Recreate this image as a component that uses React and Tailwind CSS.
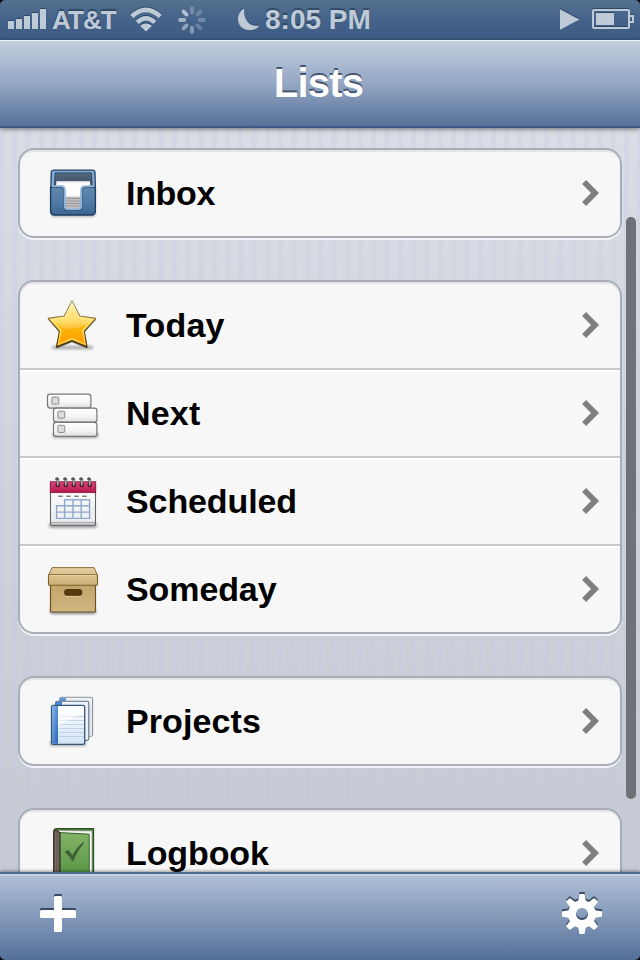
import React from "react";

function Gradient({ id, stops }) {
  return (
    <linearGradient id={id} x1="0" y1="0" x2="0" y2="1">
      {stops.map(([offset, color]) => (
        <stop key={offset} offset={offset} stopColor={color} />
      ))}
    </linearGradient>
  );
}

function SoftShadow({ id }) {
  return (
    <filter id={id} x="-20%" y="-100%" width="140%" height="300%">
      <feGaussianBlur stdDeviation="1.4" />
    </filter>
  );
}

const iconClass = "block h-[60px] w-[60px]";

function InboxIcon() {
  return (
    <svg className={iconClass} viewBox="0 -1 60 60">
      <defs>
        <Gradient id="inFront" stops={[[0, "#6187af"], [0.5, "#527ba5"], [1, "#3c658f"]]} />
        <Gradient id="inBack" stops={[[0, "#54697f"], [1, "#3a4c62"]]} />
        <Gradient id="inRim" stops={[[0, "#78a6d6"], [1, "#8fb6dc"]]} />
        <SoftShadow id="inS" />
      </defs>
      <rect x="7" y="48.5" width="44" height="4" rx="2" fill="#000" opacity="0.35" filter="url(#inS)" />
      <path d="M9.5 6.2H49Q50.8 6.2 51 8.2L51.4 26H6.8L7.2 8.2Q7.6 6.2 9.5 6.2Z" fill="url(#inRim)" stroke="#233f60" strokeWidth="1.3" />
      <path d="M11.2 9H47.4L48.2 22H10.4Z" fill="url(#inBack)" stroke="#304761" strokeWidth="1" />
      <path d="M12.4 17.2H46L46.4 24H38V45H20.4V24H12Z" fill="#fff" />
      <path d="M12.6 17.8H45.8" stroke="#ddd3dc" strokeWidth="1.2" />
      <rect x="20.6" y="32.5" width="17" height="12" fill="#c0c0c2" />
      <path d="M21 34.5H37M21 37H37M21 39.5H37M21 42H37" stroke="#98989b" strokeWidth="1" />
      <path d="M6.6 23.4H17Q20.2 23.4 20.2 27V43.5Q20.2 46.4 23.5 46.4H34.5Q37.8 46.4 37.8 43.5V27Q37.8 23.4 41 23.4H51.4V47Q51.4 51 47.4 51H10.6Q6.6 51 6.6 47Z" fill="url(#inFront)" stroke="#1d3f66" strokeWidth="1.4" />
      <path d="M8 22.3H17Q20.8 22.3 20.8 26V42.5Q20.8 45.2 24 45.2H34Q37.2 45.2 37.2 42.5V26Q37.2 22.3 41 22.3H50" fill="none" stroke="#8db5dc" strokeWidth="2" />
    </svg>
  );
}

function StarIcon() {
  return (
    <svg className={iconClass} viewBox="0 -1 60 60">
      <defs>
        <Gradient id="stFill" stops={[[0, "#ffe88a"], [0.45, "#ffd23c"], [0.55, "#fdb80d"], [1, "#ff9c00"]]} />
        <Gradient id="stRim" stops={[[0, "#fffbe0"], [0.5, "#ffe36a"], [1, "#ffc52e"]]} />
        <Gradient id="stLine" stops={[[0, "#aaa071"], [0.4, "#8b7430"], [1, "#3c2c14"]]} />
        <SoftShadow id="stS" />
      </defs>
      <rect x="8" y="50" width="41" height="3" rx="1.5" fill="#000" opacity="0.35" filter="url(#stS)" />
      <path d="M28 5.4L36 21L52.2 23.6L40.6 36.2L43.4 52.4L28 46.3L12.2 52.4L15.2 36.2L4 23.6L20 21Z" fill="#4b3c1c" opacity="0.85" />
      <path d="M28 4.8L35.8 20L51.8 22.4L40.3 35L43 50.8L28 44.6L12.4 50.8L15.4 35L4.1 22.4L20.2 20Z" fill="url(#stRim)" stroke="url(#stLine)" strokeWidth="1.1" strokeLinejoin="round" />
      <path d="M28 8.8L34.6 22L47.6 24L37.8 34.2L40.2 47L28 41.8L15.2 47L17.9 34.2L8.4 24L21.4 22Z" fill="url(#stFill)" />
      <path d="M28 8.8L34.6 22L47.6 24L42.3 29Q30 34.5 17 31.8L8.4 24L21.4 22Z" fill="#fff" opacity="0.22" />
    </svg>
  );
}

function StackIcon() {
  const drawers = [[3.5, 6.5], [9.5, 20.6], [9.5, 34.8]];
  return (
    <svg className={iconClass} viewBox="0 -4 60 60">
      <defs>
        <Gradient id="skFill" stops={[[0, "#fff"], [0.55, "#f6f6f6"], [1, "#dedede"]]} />
        <SoftShadow id="skS" />
      </defs>
      <rect x="9" y="45.5" width="45" height="5" rx="2" fill="#000" opacity="0.45" filter="url(#skS)" />
      {drawers.map(([x, y]) => (
        <g key={y}>
          <rect x={x} y={y + 0.6} width="43.4" height="14" rx="2.6" fill="url(#skFill)" stroke="#777" strokeWidth="1.2" />
          <rect x={x + 4.3} y={y + 3.6} width="7" height="7" rx="1" fill="#dcdcdc" stroke="#8b8b8b" strokeWidth="1" />
        </g>
      ))}
    </svg>
  );
}

function CalendarIcon() {
  return (
    <svg className={iconClass} viewBox="0 -3.4 60 60">
      <defs>
        <Gradient id="caTop" stops={[[0, "#d9487a"], [1, "#b5174f"]]} />
        <Gradient id="caPage" stops={[[0, "#fff"], [0.9, "#ececef"], [1, "#c5c5c8"]]} />
        <SoftShadow id="caS" />
      </defs>
      <rect x="5" y="49" width="48" height="4" rx="2" fill="#000" opacity="0.45" filter="url(#caS)" />
      <rect x="6.5" y="8" width="45" height="42.8" rx="1" fill="url(#caPage)" stroke="#5f6367" strokeWidth="1.1" />
      <path d="M7 48H51" stroke="#a3a5aa" strokeWidth="1" />
      <rect x="6.3" y="7.4" width="45.4" height="10.8" fill="url(#caTop)" stroke="#8c1b41" strokeWidth="0.9" />
      {[13.4, 21.4, 29.4, 37.4, 45.4].map((x) => (
        <g key={x}>
          <rect x={x - 1.8} y="8.4" width="4.4" height="4.4" rx="1.4" fill="#6f1435" />
          <path d={`M${x + 0.4} 10.8V5Q${x + 0.2} 3.7 ${x - 0.9} 4.5`} fill="none" stroke="#4d4e53" strokeWidth="2.6" strokeLinecap="round" />
          <path d={`M${x + 0.5} 10.4V5.4`} stroke="#dcdcdf" strokeWidth="1" />
        </g>
      ))}
      {[14.5, 22.5, 30.5, 38.5].map((x) => (
        <path key={x} d={`M${x} 21.8H${x + 4.4}`} stroke="#666669" strokeWidth="1.4" strokeDasharray="1.8 .4" />
      ))}
      <path d="M20.6 25.3H45.6M12.6 31.4H45.6M12.6 37.7H45.6M12.6 44H45.6M12.6 31.4V44M20.6 25.3V44M29 25.3V44M37.2 25.3V44M45.6 25.3V44" fill="none" stroke="#8da8ca" strokeWidth="1.4" strokeLinecap="square" />
    </svg>
  );
}

function BoxIcon() {
  return (
    <svg className={iconClass} viewBox="0 -2 60 60">
      <defs>
        <Gradient id="bxTop" stops={[[0, "#e6d2a6"], [1, "#d8be88"]]} />
        <Gradient id="bxLid" stops={[[0, "#dcc38e"], [1, "#cbae74"]]} />
        <Gradient id="bxBody" stops={[[0, "#a98c55"], [0.2, "#c5a76d"], [1, "#d0b580"]]} />
        <SoftShadow id="bxS" />
      </defs>
      <rect x="6" y="48" width="46" height="5" rx="2" fill="#000" opacity="0.45" filter="url(#bxS)" />
      <rect x="6.5" y="20" width="45" height="31" rx="1" fill="url(#bxBody)" stroke="#695126" strokeWidth="1.2" />
      <path d="M8 6.6H50L53.4 14H4.6Z" fill="url(#bxTop)" stroke="#8d713e" strokeWidth="1" strokeLinejoin="round" />
      <rect x="4.5" y="13.6" width="49" height="10.6" rx="1" fill="url(#bxLid)" stroke="#7c622f" strokeWidth="1.1" />
      <path d="M5.4 14.3H52.6" stroke="#efdcae" strokeWidth="1" />
      <rect x="20.5" y="28.5" width="17.4" height="5.8" rx="2.6" fill="#593b0b" stroke="#46300c" strokeWidth="0.9" />
      <path d="M22 35.6H36.5" stroke="#e5cb96" strokeWidth="0.9" />
    </svg>
  );
}

function ProjectsIcon() {
  return (
    <svg className={iconClass} viewBox="0 -1 60 60">
      <defs>
        <Gradient id="prPage" stops={[[0, "#fff"], [1, "#d3e3f5"]]} />
        <linearGradient id="prSpine" x1="0" y1="0" x2="1" y2="1">
          <stop offset="0" stopColor="#8ab9ec" />
          <stop offset="1" stopColor="#2464b4" />
        </linearGradient>
        <SoftShadow id="prS" />
      </defs>
      <rect x="6" y="49.6" width="36" height="4" rx="2" fill="#000" opacity="0.45" filter="url(#prS)" />
      <g stroke="#8a929c" strokeWidth="1.1">
        <rect x="15.6" y="5.2" width="33" height="39" rx="1.8" fill="#f0f1f3" />
        <path d="M16 5.8H22V9.6H16Z" fill="#5d98d4" stroke="none" />
        <path d="M45.5 14V42M47 14V42" stroke="#cfd5dc" strokeWidth="0.6" />
        <rect x="11.6" y="9.2" width="33.2" height="39.2" rx="1.8" fill="#edf2f8" stroke="#5d7185" />
        <path d="M12 9.8H18V13.6H12Z" fill="#4287cf" stroke="none" />
      </g>
      <rect x="7.5" y="13.3" width="33.2" height="39" rx="1.8" fill="url(#prPage)" stroke="#375779" strokeWidth="1.3" />
      <path d="M15 24.5H40M15 28.5H40M15 32.5H40M15 36.5H40M15 40.5H40M15 44.5H40" stroke="#a0bde0" strokeWidth="0.8" opacity="0.7" />
      <path d="M14 14H40V22Q34 23 24 28Q17 31 14 35Z" fill="#fff" opacity="0.6" />
      <rect x="8" y="13.9" width="6" height="37.8" fill="url(#prSpine)" />
    </svg>
  );
}

function LogbookIcon() {
  return (
    <svg className={iconClass} viewBox="0 -1.4 60 60">
      <defs>
        <Gradient id="lgCover" stops={[[0, "#83b367"], [1, "#559643"]]} />
      </defs>
      <path d="M10 5.5Q10.5 4.2 13 4.2H49.6V52H10Z" fill="#4c873a" stroke="#2c4d24" strokeWidth="1.1" />
      <path d="M12 6L48 6.6V50H44V10L12 8.6Z" fill="#f4f4f4" stroke="#8f9691" strokeWidth="0.6" />
      <path d="M15.8 8.2L45.2 9.8V52H15.8Z" fill="url(#lgCover)" stroke="#35652a" strokeWidth="1" />
      <path d="M9.6 7Q10 5 12 5.2L16 8.2V52H9.6Z" fill="#62584c" stroke="#322c25" strokeWidth="1" />
      <path d="M11.7 9V52M13.8 9V52" stroke="#8b8174" strokeWidth="0.6" />
      <path d="M20.6 27.5Q23.5 25.8 24.6 25.6L28.4 31.2Q32.5 23 40 17.2L39.4 19.6Q33 27 29.4 36.6H28.2Q25.5 31 20.6 27.5Z" fill="#3f5f36" />
    </svg>
  );
}

function Chevron() {
  return (
    <svg className="block h-[28px] w-[20px]" viewBox="0 0 20 28">
      <path d="M4.1 3.1L15 14L4.1 24.9" fill="none" stroke="#7f7f7f" strokeWidth="5.7" />
    </svg>
  );
}

function Row({ icon, label, spacing, last }) {
  return (
    <li className={`flex items-center pl-6 pr-5 ${last ? "h-[86px]" : "h-[88px] border-b-2 border-[#c8c8c8] shadow-[0_2px_0_#fff]"}`}>
      {icon}
      <span className={`ml-[22px] flex-1 text-[34px] leading-none font-bold text-black ${spacing}`}>{label}</span>
      <Chevron />
    </li>
  );
}

function Card({ children }) {
  return (
    <ul className="shrink-0 rounded-[16px] border-2 border-[#a9adb8] bg-[#f7f7f7] shadow-[0_2px_0_rgba(255,255,255,0.75),inset_0_2px_1px_rgba(0,0,0,0.08)]">
      {children}
    </ul>
  );
}

function StatusBar() {
  const spokes = [0.35, 0.3, 0.35, 0.3, 0.5, 0.6, 0.72, 0.85];
  return (
    <header className="relative flex h-10 shrink-0 items-center bg-linear-to-b from-[#54708f] via-[#45638a] to-[#3d5b82] text-[#bfcad7] [text-shadow:0_-2px_1px_rgba(30,50,80,0.6)]">
      <svg className="ml-2 h-10 w-[40px] drop-shadow-[0_-1px_0_#2e486c]" viewBox="0 0 40 40" fill="#bfcad7">
        <path d="M0 21H6V29H0ZM8 19H14V29H8ZM16 16H22V29H16ZM24 13H30V29H24ZM32 9H38V29H32Z" />
      </svg>
      <span className="ml-1 w-[64px] text-[26px] leading-10 font-bold tracking-[-0.9px]">AT&amp;T</span>
      <svg className="ml-[14px] h-10 w-8 drop-shadow-[0_-1px_0_#2e486c]" viewBox="0 0 32 40" fill="none" stroke="#bfcad7">
        <path d="M1.8 16.4Q16 3.2 30.2 16.4" strokeWidth="4.6" />
        <path d="M7.2 22.3Q16 14.3 24.8 22.3" strokeWidth="4.4" />
        <path d="M10 25.8Q16 21 22 25.8L16 31.5Z" fill="#bfcad7" stroke="none" />
      </svg>
      <svg className="ml-[16px] h-10 w-7" viewBox="0 0 28 40">
        {spokes.map((opacity, i) => (
          <rect key={i} x="12.1" y="6.2" width="3.8" height="8" rx="1.9" fill="#c7d2df" opacity={opacity} transform={`rotate(${i * 45} 14 20)`} />
        ))}
      </svg>
      <svg className="ml-[32px] h-10 w-[22px] overflow-visible drop-shadow-[0_-1px_0_#2e486c]" viewBox="0 0 22 40">
        <path d="M6.3 8.5C-3 12.5 -2.5 30 11.5 30C16 30 19.5 28.5 21.2 25.4C11.5 27.5 5 19 6.3 8.5Z" fill="#bfcad7" />
      </svg>
      <span className="ml-[5px] w-[112px] text-[28px] leading-10 font-bold whitespace-nowrap">8:05 PM</span>
      <svg className="ml-auto mr-[6px] h-10 w-[76px] drop-shadow-[0_-1px_0_#2e486c]" viewBox="0 0 76 40" fill="#bfcad7">
        <path d="M2 9.3L21.3 19.5L2 29.8Z" />
        <rect x="35" y="10" width="36" height="18" rx="1" fill="none" stroke="#bfcad7" strokeWidth="2" />
        <rect x="38" y="13" width="18" height="12" />
        <path d="M72 16H75V22H72" fill="none" stroke="#bfcad7" strokeWidth="2" />
      </svg>
    </header>
  );
}

export default function App() {
  return (
    <div className="relative flex h-[960px] w-[640px] flex-col overflow-hidden bg-black font-['Liberation_Sans',sans-serif]">
      <div className="flex h-full flex-col overflow-hidden rounded-[5px]">
        <StatusBar />
        <div className="relative z-10 flex h-[88px] shrink-0 items-center justify-center border-t border-b-2 border-t-[#eef3f8] border-b-[#3d5b86] bg-linear-to-b from-[#c2cfdf] via-[#94a7c3] to-[#577299] shadow-[0_1px_5px_rgba(0,0,0,0.5)]">
          <h1 className="mb-[2px] mr-[3px] text-[40px] leading-none font-bold text-white tracking-[-0.8px] [text-shadow:0_-2px_0_#46566e]">Lists</h1>
        </div>
        <main className="relative flex min-h-0 flex-1 flex-col gap-[42px] overflow-hidden bg-[repeating-linear-gradient(90deg,rgba(190,200,222,0.22)_0_4px,transparent_4px_12px,rgba(190,200,222,0.22)_12px_13.3px),linear-gradient(#d9dde5,#c5c9d3)] px-[18px] pt-5">
          <Card>
            <Row icon={<InboxIcon />} label="Inbox" spacing="tracking-[-0.3px]" last />
          </Card>
          <Card>
            <Row icon={<StarIcon />} label="Today" spacing="tracking-[0.2px]" />
            <Row icon={<StackIcon />} label="Next" spacing="tracking-[0.2px]" />
            <Row icon={<CalendarIcon />} label="Scheduled" spacing="tracking-[-0.1px]" />
            <Row icon={<BoxIcon />} label="Someday" spacing="tracking-[-0.1px]" last />
          </Card>
          <Card>
            <Row icon={<ProjectsIcon />} label="Projects" spacing="tracking-[0.1px]" last />
          </Card>
          <Card>
            <Row icon={<LogbookIcon />} label="Logbook" spacing="tracking-[-0.1px]" last />
          </Card>
          <div className="absolute top-[89px] right-1 h-[582px] w-[10px] rounded-full bg-[#6e7178]" />
        </main>
        <footer className="relative z-10 flex h-[88px] shrink-0 items-center justify-between border-t-2 border-[#506a91] bg-linear-to-b from-[#b0c0d7] via-[#8399b9] to-[#546f98] px-9 pb-2 shadow-[inset_0_2px_0_#c7d3e2,0_-1px_3px_rgba(0,0,0,0.4)]">
          <svg className="h-11 w-11 drop-shadow-[0_-2px_0_#394a62]" viewBox="0 0 44 44">
            <path d="M19 5H25L26 6V19H39L40 20V26L39 27H26V40L25 41H19L18 40V27H5L4 26V20L5 19H18V6Z" fill="#fff" />
          </svg>
          <svg className="h-11 w-11 drop-shadow-[0_-2px_0_#394a62]" viewBox="0 0 44 44">
            <g fill="#fff">
              {[0, 45, 90, 135, 180, 225, 270, 315].map((angle) => (
                <path key={angle} d="M17.8 13L19.3 3.5Q19.4 3 20 3H24Q24.6 3 24.7 3.5L26.2 13Z" transform={`rotate(${angle} 22 23)`} />
              ))}
              <path fillRule="evenodd" d="M22 9A14 14 0 1 1 21.9 9ZM22 17A6 6 0 1 0 22.1 17Z" />
            </g>
          </svg>
        </footer>
      </div>
    </div>
  );
}
